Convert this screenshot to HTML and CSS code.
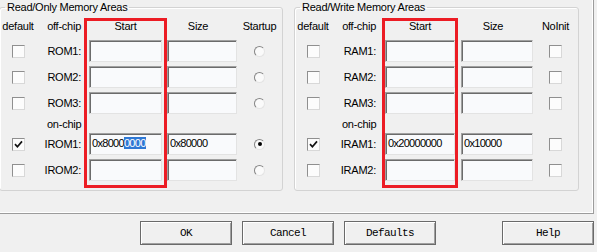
FILE: index.html
```html
<!DOCTYPE html>
<html lang="en">
<head>
    <meta charset="UTF-8">
    <title>Target - Memory Areas</title>
    <link rel="stylesheet" href="styles.css">
</head>
<body>
    <div class="tab-page">
        <fieldset class="group group-rom">
            <legend>Read/Only Memory Areas</legend>
            <div class="mem-grid grid-rom">
                <span class="head">default</span>
                <span class="head label">off-chip</span>
                <span class="head start-col">Start</span>
                <span class="head size-col">Size</span>
                <span class="head">Startup</span>

                <span class="check"></span>
                <span class="label">ROM1:</span>
                <span class="field start"></span>
                <span class="field"></span>
                <span class="radio"></span>

                <span class="check"></span>
                <span class="label">ROM2:</span>
                <span class="field start"></span>
                <span class="field"></span>
                <span class="radio"></span>

                <span class="check"></span>
                <span class="label">ROM3:</span>
                <span class="field start"></span>
                <span class="field"></span>
                <span class="radio"></span>

                <span class="chip">on-chip</span>

                <span class="check"><svg viewBox="0 0 9 9"><path d="M1 4.2 L3.4 6.8 L8 1.4"/></svg></span>
                <span class="label">IROM1:</span>
                <span class="field start">0x8000<span class="sel">0000</span></span>
                <span class="field">0x80000</span>
                <span class="radio on"></span>

                <span class="check"></span>
                <span class="label">IROM2:</span>
                <span class="field start"></span>
                <span class="field"></span>
                <span class="radio"></span>

                <div class="mark"></div>
            </div>
        </fieldset>

        <fieldset class="group group-ram">
            <legend>Read/Write Memory Areas</legend>
            <div class="mem-grid grid-ram">
                <span class="head">default</span>
                <span class="head label">off-chip</span>
                <span class="head start-col">Start</span>
                <span class="head size-col">Size</span>
                <span class="head">NoInit</span>

                <span class="check"></span>
                <span class="label">RAM1:</span>
                <span class="field start"></span>
                <span class="field"></span>
                <span class="check"></span>

                <span class="check"></span>
                <span class="label">RAM2:</span>
                <span class="field start"></span>
                <span class="field"></span>
                <span class="check"></span>

                <span class="check"></span>
                <span class="label">RAM3:</span>
                <span class="field start"></span>
                <span class="field"></span>
                <span class="check"></span>

                <span class="chip">on-chip</span>

                <span class="check"><svg viewBox="0 0 9 9"><path d="M1 4.2 L3.4 6.8 L8 1.4"/></svg></span>
                <span class="label">IRAM1:</span>
                <span class="field start">0x20000000</span>
                <span class="field">0x10000</span>
                <span class="check"></span>

                <span class="check"></span>
                <span class="label">IRAM2:</span>
                <span class="field start"></span>
                <span class="field"></span>
                <span class="check"></span>

                <div class="mark"></div>
            </div>
        </fieldset>
    </div>

    <div class="buttons">
        <button class="btn">OK</button>
        <button class="btn">Cancel</button>
        <button class="btn">Defaults</button>
        <button class="btn btn-help">Help</button>
    </div>
</body>
</html>
```

FILE: styles.css
```css
body {
    margin: 0;
    width: 597px;
    height: 252px;
    overflow: hidden;
    background-color: #f0f0f0;
    font-family: "Liberation Sans", Arial, sans-serif;
    font-size: 11px;
    letter-spacing: -0.25px;
    color: #000;
}

.tab-page {
    display: flex;
    gap: 11px;
    width: 595px;
    margin-left: -1px;
    padding: 0 14px 22px 0;
    box-sizing: border-box;
    border-right: 1px solid #9c9c9c;
    border-bottom: 1px solid #9c9c9c;
    box-shadow: inset -1px -1px 0 #fff;
}

.group {
    margin: 0;
    padding: 0 0 9px 0;
    min-width: 0;
    box-sizing: border-box;
    border: 1px solid #d3d3d3;
    border-radius: 3px;
    box-shadow: inset 1px 1px 0 #fff;
}

.group-rom {
    width: 284px;
}

.group-ram {
    width: 285px;
}

.group legend {
    margin-left: 5px;
    padding: 0 2px;
    line-height: 14px;
}

.mem-grid {
    position: relative;
    display: grid;
    grid-template-rows: 22px 22px 22px 22px 11px 22px 22px;
    row-gap: 4px;
    align-items: center;
}

.grid-rom {
    grid-template-columns: 36px 53px 78px 70px 1fr;
}

.grid-ram {
    grid-template-columns: 36px 54px 76px 72px 1fr;
}

.head {
    align-self: end;
    line-height: 13px;
    padding-bottom: 3px;
    text-align: center;
    white-space: nowrap;
}

.label {
    text-align: right;
    padding-right: 8px;
    line-height: 13px;
}

.grid-ram .label {
    padding-right: 9px;
}

.head.start-col {
    justify-self: start;
    width: 73px;
}

.grid-ram .head.start-col {
    width: 70px;
}

.head.size-col {
    padding-right: 8px;
}

.chip {
    grid-column: 1 / -1;
    align-self: start;
    padding-left: 47px;
    line-height: 13px;
}

.check {
    justify-self: center;
    width: 13px;
    height: 13px;
    box-sizing: border-box;
    border: 1px solid;
    border-color: #8f8f8f #d8d8d8 #d8d8d8 #8f8f8f;
    background-color: #fcfcfc;
    display: flex;
    align-items: center;
    justify-content: center;
}

.check svg {
    width: 9px;
    height: 9px;
    fill: none;
    stroke: #111;
    stroke-width: 1.7;
}

.radio {
    justify-self: center;
    width: 11px;
    height: 11px;
    box-sizing: border-box;
    border: 1px solid;
    border-color: #858585 #e4e4e4 #e4e4e4 #858585;
    border-radius: 50%;
    background-color: #fafafa;
    display: flex;
    align-items: center;
    justify-content: center;
}

.radio.on::after {
    content: "";
    width: 4px;
    height: 4px;
    border-radius: 50%;
    background-color: #000;
}

.field {
    height: 22px;
    box-sizing: border-box;
    border: 1px solid;
    border-color: #a0a0a0 #e3e3e3 #e3e3e3 #a0a0a0;
    box-shadow: inset 1px 1px 0 #6b6b6b;
    background-color: #f9fafc;
    padding: 3px 0 0 2px;
    line-height: 13px;
    letter-spacing: -0.7px;
    white-space: nowrap;
    overflow: hidden;
}

.field.start {
    justify-self: start;
    width: 73px;
}

.grid-ram .field.start {
    width: 70px;
}

.sel {
    background-color: #2f78d4;
    color: #fff;
}

/* red highlight box round the Start column */
.mark {
    position: absolute;
    grid-column: 3 / 4;
    grid-row: 1 / -1;
    top: 4px;
    bottom: -7px;
    left: -5px;
    right: 0;
    border: 3px solid #ec1c24;
    pointer-events: none;
}

.grid-ram .mark {
    left: -3px;
    right: 3px;
}

.buttons {
    display: flex;
    justify-content: flex-end;
    gap: 10px;
    width: 594px;
    margin-top: 7px;
}

.btn {
    width: 92px;
    height: 24px;
    padding: 0;
    box-sizing: border-box;
    border: 1px solid #6a6a6a;
    border-radius: 0;
    box-shadow: inset 1px 1px 0 #fff, inset -1px -1px 0 #a0a0a0;
    background-color: #f0f0f0;
    font-family: "Liberation Mono", "Courier New", monospace;
    font-size: 11px;
    letter-spacing: -0.6px;
    color: #000;
}

.btn-help {
    margin-left: 56px;
}
```
